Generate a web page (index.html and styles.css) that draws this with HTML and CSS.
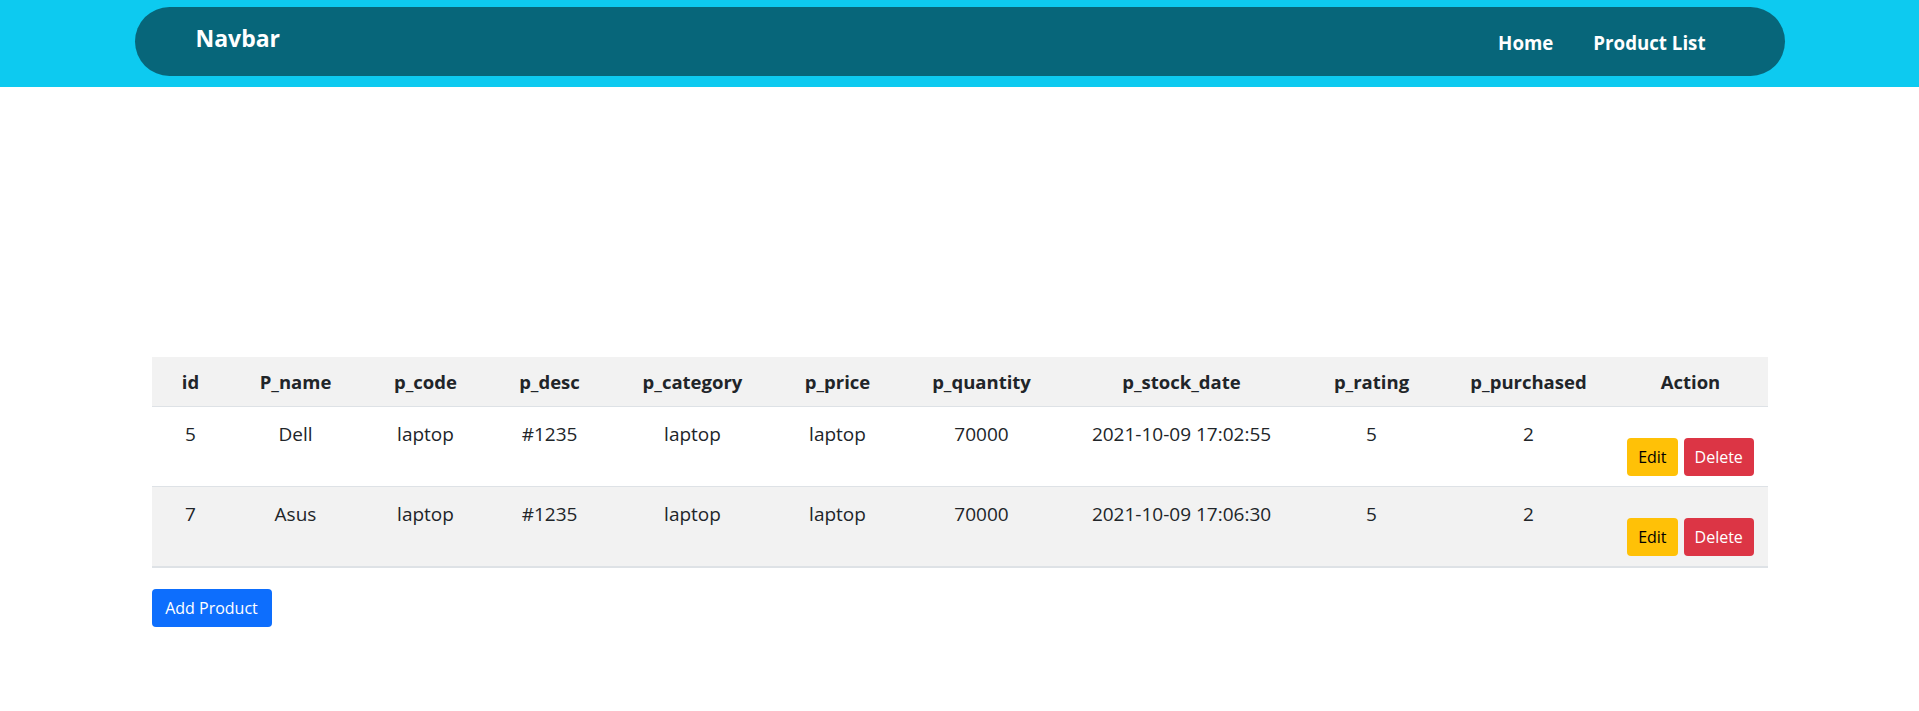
FILE: index.html
```html
<!DOCTYPE html>
<html lang="en">
<head>
<meta charset="utf-8">
<title>Product List</title>
<link rel="stylesheet" href="styles.css">
</head>
<body>
<header class="topbar">
  <nav class="pill">
    <a class="brand" href="#">Navbar</a>
    <div class="links">
      <a href="#">Home</a>
      <a href="#">Product List</a>
    </div>
  </nav>
</header>
<main class="content">
  <table class="products">
    <thead>
      <tr>
        <th class="c-id">id</th>
        <th class="c-name">P_name</th>
        <th class="c-code">p_code</th>
        <th class="c-desc">p_desc</th>
        <th class="c-cat">p_category</th>
        <th class="c-price">p_price</th>
        <th class="c-qty">p_quantity</th>
        <th class="c-date">p_stock_date</th>
        <th class="c-rating">p_rating</th>
        <th class="c-purch">p_purchased</th>
        <th class="c-action">Action</th>
      </tr>
    </thead>
    <tbody>
      <tr>
        <td>5</td><td>Dell</td><td>laptop</td><td>#1235</td><td>laptop</td><td>laptop</td><td>70000</td><td>2021-10-09 17:02:55</td><td>5</td><td>2</td>
        <td class="actions"><button class="btn btn-edit">Edit</button><button class="btn btn-delete">Delete</button></td>
      </tr>
      <tr class="striped">
        <td>7</td><td>Asus</td><td>laptop</td><td>#1235</td><td>laptop</td><td>laptop</td><td>70000</td><td>2021-10-09 17:06:30</td><td>5</td><td>2</td>
        <td class="actions"><button class="btn btn-edit">Edit</button><button class="btn btn-delete">Delete</button></td>
      </tr>
    </tbody>
  </table>
  <button class="btn btn-add">Add Product</button>
</main>
</body>
</html>
```
FILE: styles.css
```css
* { box-sizing: border-box; }
body {
  margin: 0;
  font-family: "Open Sans", "Noto Sans", sans-serif;
  color: #212529;
  background: #fff;
}
.topbar {
  background: #0dcaf0;
  padding: 7px 0 11px;
}
.pill {
  width: 1650px;
  height: 69px;
  margin: 0 auto;
  background: #07667a;
  border-radius: 35px;
  display: flex;
  align-items: center;
  justify-content: space-between;
  padding: 0 79px 0 61px;
}
.brand {
  color: #fff;
  text-decoration: none;
  font-weight: 700;
  font-size: 23px;
  margin-top: -8px;
}
.links {
  display: flex;
  gap: 40px;
}
.links a {
  color: #fff;
  text-decoration: none;
  font-weight: 700;
  font-size: 18.7px;
  margin-top: 2px;
}
.content {
  width: 1616px;
  margin: 270px auto 0;
}
.products {
  width: 1616px;
  border-collapse: collapse;
  table-layout: fixed;
  font-size: 19px;
  line-height: 27px;
}
.products th {
  background: #f2f2f2;
  font-weight: 700;
  font-size: 18.5px;
  padding: 11px 4px;
  border-bottom: 1px solid #dee2e6;
  text-align: center;
}
.products td {
  text-align: center;
  vertical-align: top;
  padding: 14px 4px 0;
  height: 80px;
  border-bottom: 1px solid #dee2e6;
}
.products tr.striped td { background: #f2f2f2; }
.products tbody tr:last-child td { border-bottom: 2px solid #dee2e6; }
.products td.actions { padding-top: 31px; }
.c-id { width: 78px; }
.c-name { width: 132px; }
.c-code { width: 128px; }
.c-desc { width: 120px; }
.c-cat { width: 166px; }
.c-price { width: 124px; }
.c-qty { width: 164px; }
.c-date { width: 236px; }
.c-rating { width: 144px; }
.c-purch { width: 170px; }
.c-action { width: 154px; }
.btn {
  font-family: "Open Sans", "Noto Sans", sans-serif;
  font-size: 16px;
  line-height: 24px;
  padding: 6px 10px;
  border: 1px solid transparent;
  border-radius: 4px;
  cursor: pointer;
  height: 38px;
}
.actions { white-space: nowrap; padding-left: 0; padding-right: 0; }
.btn-edit {
  background: #ffc107;
  color: #000;
  margin-right: 6px;
}
.btn-delete {
  background: #dc3545;
  color: #fff;
}
.btn-add {
  margin-top: 21px;
  background: #0d6efd;
  color: #fff;
  width: 120px;
  padding: 6px 0;
}
```
